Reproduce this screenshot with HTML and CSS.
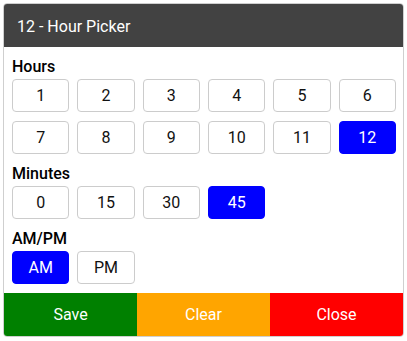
FILE: index.html
```html
<!DOCTYPE html>
<html lang="en">
<head>
    <meta charset="UTF-8">
    <meta name="viewport" content="width=device-width, initial-scale=1.0">
    <title>12 - Hour Picker</title>
    <link rel="stylesheet" href="styles.css">
</head>
<body>
    <div class="picker">
        <header class="pickerHeader">12 - Hour Picker</header>
        <div class="pickerBody">
            <div class="groupLabel">Hours</div>
            <div class="options">
                <button class="opt">1</button>
                <button class="opt">2</button>
                <button class="opt">3</button>
                <button class="opt">4</button>
                <button class="opt">5</button>
                <button class="opt">6</button>
                <button class="opt">7</button>
                <button class="opt">8</button>
                <button class="opt">9</button>
                <button class="opt">10</button>
                <button class="opt">11</button>
                <button class="opt selected">12</button>
            </div>

            <div class="groupLabel">Minutes</div>
            <div class="options">
                <button class="opt">0</button>
                <button class="opt">15</button>
                <button class="opt">30</button>
                <button class="opt selected">45</button>
            </div>

            <div class="groupLabel">AM/PM</div>
            <div class="options">
                <button class="opt selected">AM</button>
                <button class="opt">PM</button>
            </div>
        </div>
        <footer class="pickerFooter">
            <button class="actionBtn saveBtn">Save</button>
            <button class="actionBtn clearBtn">Clear</button>
            <button class="actionBtn closeBtn">Close</button>
        </footer>
    </div>
</body>
</html>
```

FILE: styles.css
```css
body {
    font-family: Roboto, "Liberation Sans", Arial, sans-serif;
    background-color: #fff;
    color: #000;
    margin: 0;
    padding: 3px;
}
.picker {
    width: 401px;
    box-sizing: border-box;
    border: 1px solid #cfcfcf;
    border-radius: 4px;
    overflow: hidden;
    background: #fff;
}
.pickerHeader {
    background-color: #424242;
    color: #fff;
    font-size: 16px;
    line-height: 19px;
    height: 43px;
    box-sizing: border-box;
    padding: 13px 13px 11px;
}
.pickerBody {
    padding: 10px 7px 9px 8px;
}
.groupLabel {
    font-size: 16px;
    line-height: 19px;
    font-weight: 500;
    margin-bottom: 3px;
}
.options + .groupLabel {
    margin-top: 10px;
}
.options {
    display: grid;
    grid-template-columns: repeat(6, 1fr);
    gap: 9px 8px;
}
.opt {
    height: 33px;
    font-family: inherit;
    font-size: 16px;
    color: #111;
    background: #fff;
    border: 1px solid #ccc;
    border-radius: 4px;
    padding: 0;
    cursor: pointer;
}
.opt.selected {
    background: #0000ff;
    border-color: #0000ff;
    color: #fff;
}
.pickerFooter {
    display: flex;
}
.actionBtn {
    flex: 1;
    height: 43px;
    border: none;
    font-family: inherit;
    font-size: 16px;
    color: #fff;
    cursor: pointer;
    padding: 0;
}
.saveBtn {
    background: #008000;
}
.clearBtn {
    background: #ffa500;
}
.closeBtn {
    background: #ff0000;
}
```
